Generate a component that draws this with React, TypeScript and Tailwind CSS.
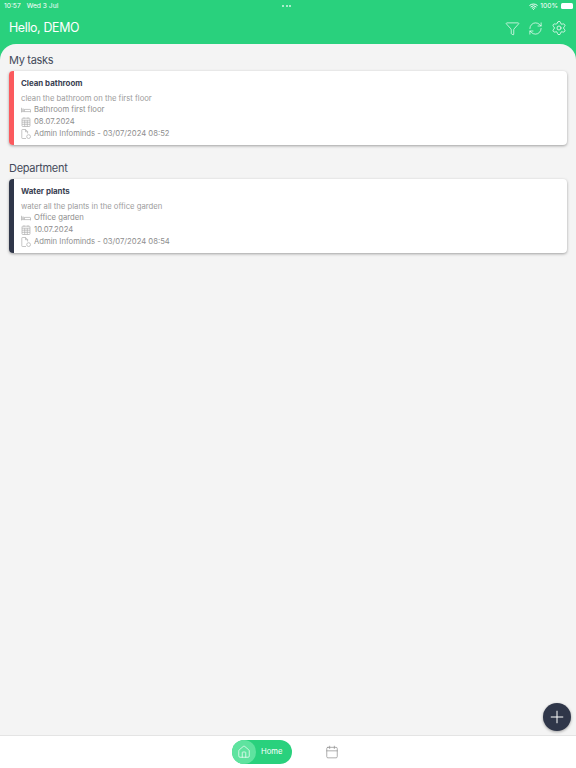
import { Filter, Home, Calendar, Plus, RefreshCw, Settings, Wifi } from 'lucide-react';

type Task = {
    title: string;
    description: string;
    place: string;
    date: string;
    author: string;
    accent: string;
};

const myTasks: Task = {
    title: 'Clean bathroom',
    description: 'clean the bathroom on the first floor',
    place: 'Bathroom first floor',
    date: '08.07.2024',
    author: 'Admin Infominds - 03/07/2024 08:52',
    accent: 'bg-[#fb5a5e]',
};

const departmentTasks: Task = {
    title: 'Water plants',
    description: 'water all the plants in the office garden',
    place: 'Office garden',
    date: '10.07.2024',
    author: 'Admin Infominds - 03/07/2024 08:54',
    accent: 'bg-[#2f3649]',
};

function BedIcon() {
    return (
        <svg width="10" height="10" viewBox="0 0 10 10" fill="none" stroke="currentColor" strokeWidth="0.7">
            <path d="M0.5 2.8v4.6M0.5 6.6h9M9.5 7.4V5a0.6 0.6 0 0 0-0.6-0.6H3.4v2.2" />
            <rect x="1.2" y="4" width="1.7" height="1.6" rx="0.5" />
        </svg>
    );
}

function GridCalendarIcon() {
    return (
        <svg width="10" height="10" viewBox="0 0 10 10" fill="none" stroke="currentColor" strokeWidth="0.7">
            <rect x="1" y="1.2" width="8" height="8.3" rx="0.8" />
            <path d="M1 3.2h8M1 5.2h8M1 7.3h8M3.7 3.2v6.3M6.3 3.2v6.3M3 0.3v1.4M7 0.3v1.4" />
        </svg>
    );
}

function FileIcon() {
    return (
        <svg width="10" height="10" viewBox="0 0 10 10" fill="none" stroke="currentColor" strokeWidth="0.7">
            <path d="M5 9.5H1.4a0.6 0.6 0 0 1-0.6-0.6V1.1a0.6 0.6 0 0 1 0.6-0.6h3.2l2 2v2" />
            <path d="M4.5 0.6v2.1h2.1" />
            <circle cx="7.6" cy="7.6" r="1.9" />
        </svg>
    );
}

function InfoRow({ icon, text }: { icon: React.ReactNode; text: string }) {
    return (
        <div className="flex h-[12px] items-center">
            <span className="flex w-[10px] items-center justify-center text-[#adadad]">{icon}</span>
            <span className="ml-[3px] text-[7.7px] leading-[12px] text-[#8e8e8e]">{text}</span>
        </div>
    );
}

function TaskCard({ task }: { task: Task }) {
    return (
        <div className="mx-[9px] flex h-[74px] overflow-hidden rounded-[4px] bg-white shadow-[0_1px_3px_rgba(0,0,0,0.35)]">
            <div className={`w-[5px] shrink-0 ${task.accent}`} />
            <div className="flex-1 pl-[7px] pt-[7px]">
                <div className="text-[7.9px] font-bold leading-[11px] text-[#3a4152]">{task.title}</div>
                <div className="mt-[4px] text-[7.7px] leading-[11px] text-[#9c9c9c]">{task.description}</div>
                <div className="flex flex-col">
                    <InfoRow icon={<BedIcon />} text={task.place} />
                    <InfoRow icon={<GridCalendarIcon />} text={task.date} />
                    <InfoRow icon={<FileIcon />} text={task.author} />
                </div>
            </div>
        </div>
    );
}

export default function App() {
    return (
        <div className="relative flex h-[768px] w-[576px] flex-col overflow-hidden bg-[#29d17d] font-['Inter',sans-serif]">
            <div className="relative flex h-[11px] items-center justify-between pl-[4px] pr-[3px] pt-[1px] text-[6.7px] leading-[11px] text-white">
                <div className="flex gap-[6px]">
                    <span>10:57</span>
                    <span>Wed 3 Jul</span>
                </div>
                <div className="absolute left-[282px] top-[5px] flex gap-[1.5px]">
                    <span className="h-[2px] w-[2px] rounded-full bg-white/80" />
                    <span className="h-[2px] w-[2px] rounded-full bg-white/80" />
                    <span className="h-[2px] w-[2px] rounded-full bg-white/80" />
                </div>
                <div className="flex items-center gap-[2px]">
                    <Wifi size={9} strokeWidth={2.5} />
                    <span>100%</span>
                    <span className="ml-[1px] h-[6px] w-[12px] rounded-[1.5px] bg-white" />
                </div>
            </div>

            <div className="flex h-[33px] items-center justify-between pl-[9px] pr-[9px] pt-[1px]">
                <span className="text-[12.4px] tracking-[-0.35px] text-white">Hello, DEMO</span>
                <div className="flex items-center gap-[8px] text-white">
                    <Filter size={15} strokeWidth={1.1} />
                    <RefreshCw size={15} strokeWidth={1.1} />
                    <Settings size={16} strokeWidth={1.1} />
                </div>
            </div>

            <div className="flex-1 rounded-t-[16px] bg-[#f4f4f4]">
                <h2 className="ml-[9px] mt-[9px] text-[11px] font-normal leading-[14px] tracking-[-0.3px] text-[#444b5b]">My tasks</h2>
                <div className="mt-[4px]">
                    <TaskCard task={myTasks} />
                </div>
                <h2 className="ml-[9px] mt-[16px] text-[11px] font-normal leading-[14px] tracking-[-0.3px] text-[#444b5b]">Department</h2>
                <div className="mt-[4px]">
                    <TaskCard task={departmentTasks} />
                </div>
            </div>

            <div className="flex h-[33px] items-center justify-center border-t border-[#e4e4e4] bg-white">
                <div className="mr-[5px] flex items-center">
                    <div className="flex h-[24px] w-[60px] items-center rounded-full bg-[#29d17d]">
                        <div className="flex h-[24px] w-[24px] items-center justify-center rounded-full bg-[#5fe39f] text-white">
                            <Home size={14} strokeWidth={1.2} />
                        </div>
                        <span className="ml-[5px] text-[7.7px] text-white">Home</span>
                    </div>
                    <div className="ml-[33px] text-[#8c8c8c]">
                        <Calendar size={14} strokeWidth={1.2} />
                    </div>
                </div>
            </div>

            <button
                className="absolute bottom-[37px] right-[5px] flex h-[28px] w-[28px] items-center justify-center rounded-full bg-[#2f3649] text-white shadow-[0_1px_3px_rgba(0,0,0,0.35)]"
                aria-label="Add"
            >
                <Plus size={20} strokeWidth={1.2} />
            </button>
        </div>
    );
}
